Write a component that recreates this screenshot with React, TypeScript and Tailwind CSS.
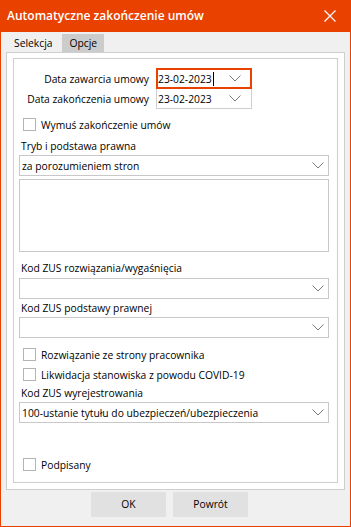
import React from 'react';

const font = { fontFamily: '"Open Sans", "Noto Sans", Arial, sans-serif' };

function Chevron() {
  return (
    <svg width="12" height="7" viewBox="0 0 12 7" className="shrink-0">
      <path d="M0.5 0.5 L6 6 L11.5 0.5" fill="none" stroke="#7a7a7a" strokeWidth="1" />
    </svg>
  );
}

function Check({ label, className = '' }: { label: string; className?: string }) {
  return (
    <div className={`flex items-center h-[13px] ${className}`}>
      <div className="ml-[9px] w-[13px] h-[13px] border border-[#b4b4b4] bg-white" />
      <span className="ml-[5px] text-[10.3px] leading-[16px] text-black">{label}</span>
    </div>
  );
}

function Combo({ value = '', className = '' }: { value?: string; className?: string }) {
  return (
    <div
      className={`ml-[5px] h-[21px] border border-[#c8c8c8] bg-white flex items-center pl-[2px] pr-[4px] ${className}`}
    >
      <span className="flex-1 text-[10.3px] leading-[16px] text-black">{value}</span>
      <Chevron />
    </div>
  );
}

function Label({ text, className = '' }: { text: string; className?: string }) {
  return <div className={`ml-[7px] h-[16px] text-[10.3px] leading-[16px] text-black ${className}`}>{text}</div>;
}

export default function App() {
  return (
    <div className="w-[351px] h-[527px] flex flex-col" style={font}>
      {/* title bar */}
      <div className="h-[32px] bg-[#e84100] flex items-center pl-[7px] pr-[15px]">
        <span className="flex-1 text-white text-[12px] font-semibold">Automatyczne zakończenie umów</span>
        <svg width="12" height="12" viewBox="0 0 12 12">
          <path d="M0.5 0.5 L11.5 11.5 M11.5 0.5 L0.5 11.5" stroke="white" strokeWidth="1.2" />
        </svg>
      </div>

      <div className="flex-1 flex flex-col bg-[#f0f0f0] border-x border-b border-[#e84100] px-[5px] pt-[2px]">
        {/* tabs */}
        <div className="flex h-[18px] ml-[-2px] text-[10.3px] leading-[18px] text-black">
          <div className="px-[10px]">Selekcja</div>
          <div className="px-[7px] bg-[#cccccc]">Opcje</div>
        </div>

        {/* tab page */}
        <div className="h-[438px] border border-[#cfcfcf] bg-white px-[6px] pt-[5px] pb-[6px] flex flex-col">
          <div className="flex-1 border border-[#cfcfcf] flex flex-col pr-[8px]">
            <div className="mt-[9px] flex items-center h-[21px]">
              <div className="w-[135px] text-right text-[10.3px] leading-[16px] text-black">Data zawarcia umowy</div>
              <div className="ml-[7px] w-[96px] h-[21px] border-2 border-[#e84100] flex items-center pr-[9px]">
                <span className="text-[10.3px] leading-[16px] text-black">23-02-2023</span>
                <div className="ml-[1px] w-px h-[14px] bg-black" />
                <div className="flex-1" />
                <Chevron />
              </div>
            </div>
            <div className="flex items-center h-[20px]">
              <div className="w-[135px] text-right text-[10.3px] leading-[16px] text-black whitespace-nowrap">
                Data zakończenia umowy
              </div>
              <div className="ml-[7px] w-[96px] h-[20px] border border-t-0 border-[#cfcfcf] flex items-center pl-[1px] pr-[10px]">
                <span className="flex-1 text-[10.3px] leading-[16px] text-black">23-02-2023</span>
                <Chevron />
              </div>
            </div>

            <Check label="Wymuś zakończenie umów" className="mt-[9px]" />

            <Label text="Tryb i podstawa prawna" className="mt-[7px]" />
            <Combo value="za porozumieniem stron" className="mt-[1px]" />
            <div className="ml-[5px] mt-[3px] h-[73px] border border-[#c8c8c8] bg-white" />

            <Label text="Kod ZUS rozwiązania/wygaśnięcia" className="mt-[8px]" />
            <Combo className="mt-[2px]" />
            <Label text="Kod ZUS podstawy prawnej" className="mt-[1px]" />
            <Combo className="mt-[1px]" />

            <Check label="Rozwiązanie ze strony pracownika" className="mt-[10px]" />
            <Check label="Likwidacja stanowiska z powodu COVID-19" className="mt-[7px]" />

            <Label text="Kod ZUS wyrejestrowania" className="mt-[4px]" />
            <Combo value="100-ustanie tytułu do ubezpieczeń/ubezpieczenia" className="mt-[1px]" />

            <Check label="Podpisany" className="mt-[35px]" />
          </div>
        </div>

        {/* buttons */}
        <div className="mt-[2px] ml-[85px] flex gap-[7px]">
          <button className="w-[75px] h-[25px] bg-[#e1e1e1] text-[10.3px] text-black">OK</button>
          <button className="w-[75px] h-[25px] bg-[#e1e1e1] text-[10.3px] text-black">Powrót</button>
        </div>
      </div>
    </div>
  );
}
